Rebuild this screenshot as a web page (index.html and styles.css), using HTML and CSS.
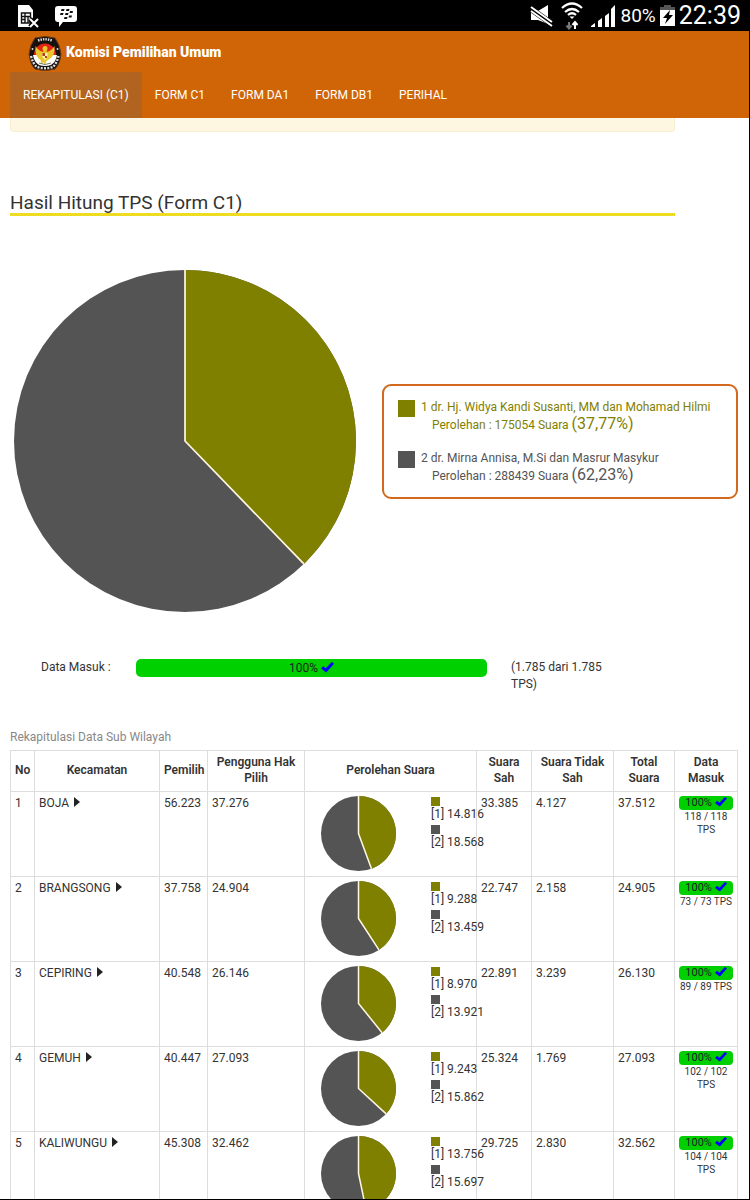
FILE: index.html
```html
<!DOCTYPE html>
<html lang="id">
<head>
<meta charset="utf-8">
<meta name="viewport" content="width=device-width, initial-scale=1">
<title>Komisi Pemilihan Umum</title>
<link rel="stylesheet" href="styles.css">
</head>
<body>
<svg class="defs" aria-hidden="true">
  <symbol id="check" viewBox="0 0 12 10"><path d="M0 6 2 3.800 4.400 5.800 10 0 12 1.600 4.800 9.600Z" fill="#00f"/></symbol>
</svg>
<div class="statusbar">
  <div class="status-group left">
    <svg width="23" height="24" viewBox="0 0 23 24"><path d="M1 1h11l4 5v17H1z" fill="#fff"/><path d="M4.500 9h9v10h-9zM4.500 12.500H8M4.500 15.500H8M8 9v10M8 12.500h5.500M11 12.500V19" stroke="#111" stroke-width="1.400" fill="none"/><path d="M13 15l8 8M21 15l-8 8" stroke="#000" stroke-width="5"/><path d="M13 15l8 8M21 15l-8 8" stroke="#fff" stroke-width="2"/></svg>
    <svg width="22" height="22" viewBox="0 0 22 22"><path d="M3 1h16q3 0 3 3v10q0 3-3 3H8l-4 5v-5H3q-3 0-3-3V4q0-3 3-3z" fill="#fff"/><path d="M6.500 4h3l-.5 2H6zM11.500 4h3l-.5 2h-3zM5.500 8h3L8 10H5zM10.500 8h3l-.5 2h-3zM15 6h3l-.5 2h-3zM9.500 12h3l-.5 2H9zM14 10.500h3l-.5 2h-3z" fill="#111"/></svg>
  </div>
  <div class="status-group right">
    <svg width="23" height="22" viewBox="0 0 23 22"><path d="M1 6h7l10-6v19L8 15H1z" fill="#fff"/><path d="M1 4l21 15" stroke="#000" stroke-width="6"/><path d="M1 2l21 15M1 6l21 15" stroke="#fff" stroke-width="2"/></svg>
    <svg class="wifi" width="22" height="28" viewBox="0 0 22 28"><g fill="none" stroke="#fff" stroke-width="2.200"><path d="M1 6Q11-3 21 6M4 10q7-6 14 0M7 13q4-3.500 8 0"/></g><path d="M8.500 14.500h5L11 17z" fill="#fff"/><path d="M8 20v6M5.500 23.500 8 26.500l2.500-3" stroke="#777" stroke-width="2" fill="none"/><path d="M14 27v-6M11.500 23l2.500-3 2.500 3" stroke="#fff" stroke-width="2" fill="none"/></svg>
    <svg width="25" height="22" viewBox="0 0 25 22"><path d="M0 22v-1l4-3v4zM7 16l4-3v9H7zM14 11l4-3v14h-4zM20 4l4-4v22h-4z" fill="#fff"/></svg>
    <span class="battery">80%</span>
    <svg width="15" height="21" viewBox="0 0 15 21"><path d="M4 0h7v2h4v4H0V2h4z" fill="#555"/><path d="M0 5h15v16H0z" fill="#fff"/><path d="M10 5 3 13h4l-2 6 8-9H9z" fill="#000"/></svg>
    <span class="clock">22:39</span>
  </div>
</div>
<div class="page">
  <header class="header">
    <a class="brand" href="#">
      <svg width="34" height="36" viewBox="0 0 34 36"><path d="M7 2Q17-1 27 2q5 7 6 16-1 10-6 15-10 3-20 0Q2 28 1 18 2 9 7 2z" fill="#16100e" stroke="#6b3a16"/><path d="M6 19a11 11.500 0 1 1 22 0z" fill="#e02613"/><path d="M5 19h24q-1 7-6 10-6 2-12 0-5-3-6-10z" fill="#fff"/><path d="M7.500 10q3 5 8 6l-1-3q0-3 3-3 2 0 2 3l-1 3q5-1 8-6 1 9-5 13l-3 2-1.500 4-1.500-3-2 2-1-4q-6-4-5-14z" fill="#e9c62c"/><path d="M14.500 17h5v4l-2.500 3-2.500-3z" fill="#fff3b0"/><path d="M14.500 17H17v3h-2.500zM17 20h2v2h-2z" fill="#b73d18"/><path d="M11 27q6 3 12 0" stroke="#776" fill="none"/><g fill="none" stroke="#ddd" stroke-width="2.400"><path d="M10 4.500q7-2.500 14 0" stroke-dasharray="1.500 1"/><path d="M3 20Q5 28 9 31q8 2.500 16 0 4-4 5.500-11" stroke-dasharray="2 1.300"/></g><circle cx="4.500" cy="13" r="1" fill="#ddd"/><circle cx="29.500" cy="13" r="1" fill="#ddd"/></svg>
      <span>Komisi Pemilihan Umum</span>
    </a>
    <nav class="nav">
      <a class="active" href="#">REKAPITULASI (C1)</a>
      <a href="#">FORM C1</a>
      <a href="#">FORM DA1</a>
      <a href="#">FORM DB1</a>
      <a href="#">PERIHAL</a>
    </nav>
  </header>
  <main class="content">
    <div class="notice"></div>
    <h1>Hasil Hitung TPS (Form C1)</h1>
    <section class="result">
      <svg class="main-pie" viewBox="-100 -100 200 200" role="img" aria-label="Perolehan suara"><circle r="100" fill="#545454"/><path d="M0 0V-100A100 100 0 0 1 69.500 71.900Z" fill="#808000"/><path d="M0-100V0L69.500 71.900" fill="none" stroke="#fff8e0"/></svg>
      <ul class="legend">
        <li class="olive"><i class="swatch"></i><div>1 dr. Hj. Widya Kandi Susanti, MM dan Mohamad Hilmi<p>Perolehan : 175054 Suara <b>(37,77%)</b></p></div></li>
        <li class="gray"><i class="swatch"></i><div>2 dr. Mirna Annisa, M.Si dan Masrur Masykur<p>Perolehan : 288439 Suara <b>(62,23%)</b></p></div></li>
      </ul>
    </section>
    <section class="progress">
      <span class="progress-label">Data Masuk :</span>
      <div class="bar">100% <svg width="13" height="11"><use href="#check"/></svg></div>
      <span class="progress-count">(1.785 dari 1.785 TPS)</span>
    </section>
    <table>
      <caption>Rekapitulasi Data Sub Wilayah</caption>
      <colgroup><col class="c-no"><col class="c-name"><col class="c-voters"><col class="c-users"><col class="c-votes"><col class="c-valid"><col class="c-invalid"><col class="c-total"><col class="c-data"></colgroup>
      <thead><tr><th>No</th><th>Kecamatan</th><th>Pemilih</th><th>Pengguna Hak Pilih</th><th>Perolehan Suara</th><th>Suara Sah</th><th>Suara Tidak Sah</th><th>Total Suara</th><th>Data Masuk</th></tr></thead>
      <tbody>
        <tr><td>1</td><td><a href="#">BOJA <i class="arrow"></i></a></td><td>56.223</td><td>37.276</td>
          <td><div class="votes"><svg class="pie" viewBox="-100 -100 200 200"><circle r="100" fill="#545454"/><path d="M0 0V-100A100 100 0 0 1 34.580 93.830Z" fill="#808000"/><path d="M0-100V0L34.580 93.830" class="cut"/></svg><div class="counts"><i class="olive"></i><span>[1] 14.816</span><i class="gray"></i><span>[2] 18.568</span></div></div></td>
          <td>33.385</td><td>4.127</td><td>37.512</td><td><div class="bar small">100% <svg width="12" height="10"><use href="#check"/></svg></div><p class="tps">118 / 118 TPS</p></td></tr>
        <tr><td>2</td><td><a href="#">BRANGSONG <i class="arrow"></i></a></td><td>37.758</td><td>24.904</td>
          <td><div class="votes"><svg class="pie" viewBox="-100 -100 200 200"><circle r="100" fill="#545454"/><path d="M0 0V-100A100 100 0 0 1 54.480 83.860Z" fill="#808000"/><path d="M0-100V0L54.480 83.860" class="cut"/></svg><div class="counts"><i class="olive"></i><span>[1] 9.288</span><i class="gray"></i><span>[2] 13.459</span></div></div></td>
          <td>22.747</td><td>2.158</td><td>24.905</td><td><div class="bar small">100% <svg width="12" height="10"><use href="#check"/></svg></div><p class="tps">73 / 73 TPS</p></td></tr>
        <tr><td>3</td><td><a href="#">CEPIRING <i class="arrow"></i></a></td><td>40.548</td><td>26.146</td>
          <td><div class="votes"><svg class="pie" viewBox="-100 -100 200 200"><circle r="100" fill="#545454"/><path d="M0 0V-100A100 100 0 0 1 62.840 77.790Z" fill="#808000"/><path d="M0-100V0L62.840 77.790" class="cut"/></svg><div class="counts"><i class="olive"></i><span>[1] 8.970</span><i class="gray"></i><span>[2] 13.921</span></div></div></td>
          <td>22.891</td><td>3.239</td><td>26.130</td><td><div class="bar small">100% <svg width="12" height="10"><use href="#check"/></svg></div><p class="tps">89 / 89 TPS</p></td></tr>
        <tr><td>4</td><td><a href="#">GEMUH <i class="arrow"></i></a></td><td>40.447</td><td>27.093</td>
          <td><div class="votes"><svg class="pie" viewBox="-100 -100 200 200"><circle r="100" fill="#545454"/><path d="M0 0V-100A100 100 0 0 1 73.680 67.610Z" fill="#808000"/><path d="M0-100V0L73.680 67.610" class="cut"/></svg><div class="counts"><i class="olive"></i><span>[1] 9.243</span><i class="gray"></i><span>[2] 15.862</span></div></div></td>
          <td>25.324</td><td>1.769</td><td>27.093</td><td><div class="bar small">100% <svg width="12" height="10"><use href="#check"/></svg></div><p class="tps">102 / 102 TPS</p></td></tr>
        <tr><td>5</td><td><a href="#">KALIWUNGU <i class="arrow"></i></a></td><td>45.308</td><td>32.462</td>
          <td><div class="votes"><svg class="pie" viewBox="-100 -100 200 200"><circle r="100" fill="#545454"/><path d="M0 0V-100A100 100 0 0 1 20.560 97.860Z" fill="#808000"/><path d="M0-100V0L20.560 97.860" class="cut"/></svg><div class="counts"><i class="olive"></i><span>[1] 13.756</span><i class="gray"></i><span>[2] 15.697</span></div></div></td>
          <td>29.725</td><td>2.830</td><td>32.562</td><td><div class="bar small">100% <svg width="12" height="10"><use href="#check"/></svg></div><p class="tps">104 / 104 TPS</p></td></tr>
      </tbody>
    </table>
  </main>
</div>
</body>
</html>
```
FILE: styles.css
```css
* { box-sizing: border-box; }
body {
  margin: 0;
  height: 100vh;
  display: flex;
  flex-direction: column;
  overflow: hidden;
  background: #000;
  color: #333;
  font: 12px/16px Roboto, "Liberation Sans", sans-serif;
}
p, ul, h1 { margin: 0; padding: 0; }
a { color: inherit; text-decoration: none; }
.defs { position: absolute; width: 0; height: 0; }

.statusbar {
  flex: none;
  height: 31px;
  padding: 0 9px 0 17px;
  display: flex;
  justify-content: space-between;
  color: #fff;
}
.status-group { display: flex; align-items: center; }
.left { gap: 15px; }
.right { gap: 4px; }
.right .wifi { margin: 0 4px; }
.battery { font-size: 19px; line-height: 31px; }
.clock { font-size: 25px; line-height: 31px; }

.page {
  flex: 1;
  min-height: 0;
  overflow: hidden;
  margin: 0 1px 1px 0;
  background: #fff;
}
.header { background: #d06508; color: #fff; padding: 4px 10px 0; }
.brand { display: flex; align-items: center; gap: 4px; padding-left: 18px; height: 37px; }
.brand span { font-size: 14px; font-weight: 900; line-height: 18px; padding-bottom: 3px; }
.nav { display: flex; }
.nav a { padding: 14px 13px; line-height: 18px; }
.nav .active { background: #b06420; }

.content { padding: 0 11px 0 10px; }
.notice {
  height: 14px;
  margin-right: 63px;
  background: #fdf6e0;
  border: 1px solid #faeed0;
  border-top: 0;
  border-radius: 0 0 4px 4px;
}
h1 {
  margin: 60px 63px 0 0;
  font-size: 19px;
  line-height: 21px;
  font-weight: 400;
  border-bottom: 3px solid #eedc20;
}
.result {
  margin-top: 54px;
  padding-left: 4px;
  display: flex;
  align-items: center;
  justify-content: space-between;
  gap: 20px;
}
.main-pie { width: 342px; height: 342px; flex: none; }
.legend {
  list-style: none;
  width: 356px;
  padding: 13px 14px 12px;
  display: grid;
  gap: 16px;
  border: 2px solid #d2691e;
  border-radius: 9px;
  line-height: 17px;
}
.legend li { display: flex; gap: 6px; white-space: nowrap; }
.legend p { padding-left: 11px; }
.legend b { font-size: 16px; font-weight: 400; line-height: 1; }
.legend .olive { color: #808000; }
.legend .gray { color: #545454; }
.swatch { width: 17px; height: 17px; background: currentColor; margin-top: 1px; }

.progress {
  display: flex;
  margin: 47px 0 36px 31px;
  line-height: 17px;
}
.progress-label { width: 95px; }
.bar {
  width: 351px;
  height: 18px;
  border-radius: 5px;
  background: #00cf00;
  color: #222;
  text-align: center;
  line-height: 18px;
}
.bar svg { vertical-align: -1px; }
.progress-count { width: 100px; margin-left: 24px; }

table { width: 100%; table-layout: fixed; border-collapse: collapse; }
caption { text-align: left; color: #888; padding-bottom: 5px; }
th, td { border: 1px solid #ddd; padding: 3px 4px 4px; vertical-align: top; text-align: left; }
th { padding-bottom: 5px; vertical-align: middle; text-align: center; font-weight: 600; }
td { height: 85px; }
.c-no { width: 24px; }
.c-name { width: 125px; }
.c-voters { width: 48px; }
.c-users { width: 97px; }
.c-votes { width: 172px; }
.c-valid { width: 55px; }
.c-invalid { width: 82px; }
.c-total { width: 61px; }
.c-data { width: 63px; }
.arrow {
  display: inline-block;
  margin-left: 2px;
  border: 5px solid transparent;
  border-left: 6px solid #222;
  border-right: 0;
}
.votes { display: flex; padding: 1px 0 0 12px; }
.pie { width: 75px; height: 75px; flex: none; }
.cut { fill: none; stroke: #fff8e0; stroke-width: 4; }
.counts { margin-left: 35px; padding-top: 1px; display: flex; flex-direction: column; white-space: nowrap; }
.counts i { width: 9px; height: 9px; }
.counts span { line-height: 16px; margin-bottom: 3px; }
.counts .olive { background: #808000; }
.counts .gray { background: #545454; }
.bar.small { width: 100%; height: 14px; margin-top: 1px; line-height: 13px; border-radius: 4px; font-size: 11px; }
.tps { font-size: 10px; line-height: 13px; text-align: center; }
```
